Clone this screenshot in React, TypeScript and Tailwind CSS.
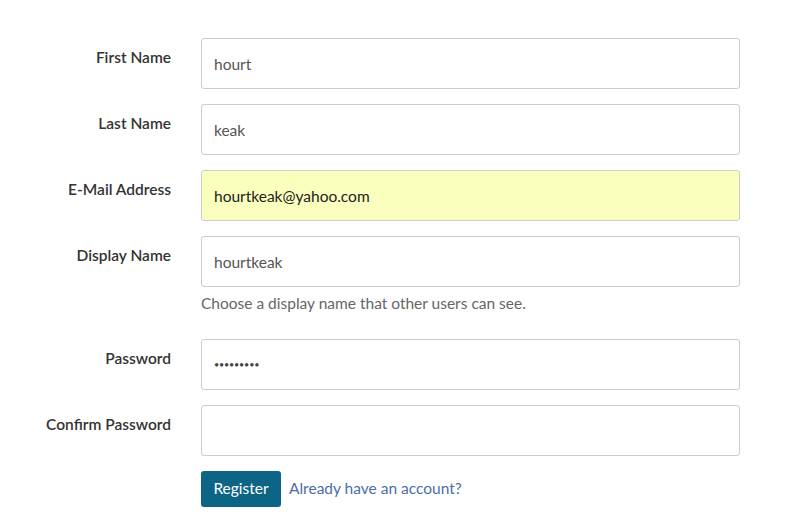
import React from 'react';

interface FieldProps {
  label: string;
  value?: string;
  type?: 'text' | 'password';
  autofill?: boolean;
  help?: string;
}

const Field: React.FC<FieldProps> = ({ label, value = '', type = 'text', autofill, help }) => {
  return (
    <div className="flex items-start">
      <label className="w-[171px] shrink-0 pt-[7px] text-right text-[15.5px] leading-6 font-semibold text-[#333]">
        {label}
      </label>
      <div className="ml-[30px] w-[539px]">
        {type === 'password' ? (
          <div className="flex h-[51px] items-center rounded-[3px] border border-[#ccc] bg-white px-[12px]">
            <span className="text-[9px] tracking-[-0.2px] text-[#444]">
              {value ? '•••••••••' : ''}
            </span>
          </div>
        ) : (
          <input
            readOnly
            value={value}
            className={`block h-[51px] w-full rounded-[3px] border border-[#ccc] px-[12px] text-[15.5px] outline-none ${
              autofill ? 'bg-[#faffbd] text-[#222]' : 'bg-white text-[#555]'
            }`}
          />
        )}
        {help && <p className="mt-[4px] text-[15.5px] leading-6 text-[#666]">{help}</p>}
      </div>
    </div>
  );
};

export default function App() {
  return (
    <div className="min-h-[529px] bg-white pt-[38px] font-['Lato',sans-serif]">
      <div className="flex flex-col gap-[15px]">
        <Field label="First Name" value="hourt" />
        <Field label="Last Name" value="keak" />
        <Field label="E-Mail Address" value="hourtkeak@yahoo.com" autofill />
        <Field label="Display Name" value="hourtkeak" help="Choose a display name that other users can see." />
        <div className="mt-[9px]">
          <Field label="Password" type="password" value="secret123" />
        </div>
        <Field label="Confirm Password" type="password" />
        <div className="flex items-center pl-[201px]">
          <button className="h-[36px] w-[80px] rounded-[3px] bg-[#0c6585] text-[15.5px] text-white">
            Register
          </button>
          <a href="#" className="ml-[8px] text-[15.5px] text-[#4a6ea8]">
            Already have an account?
          </a>
        </div>
      </div>
    </div>
  );
}
